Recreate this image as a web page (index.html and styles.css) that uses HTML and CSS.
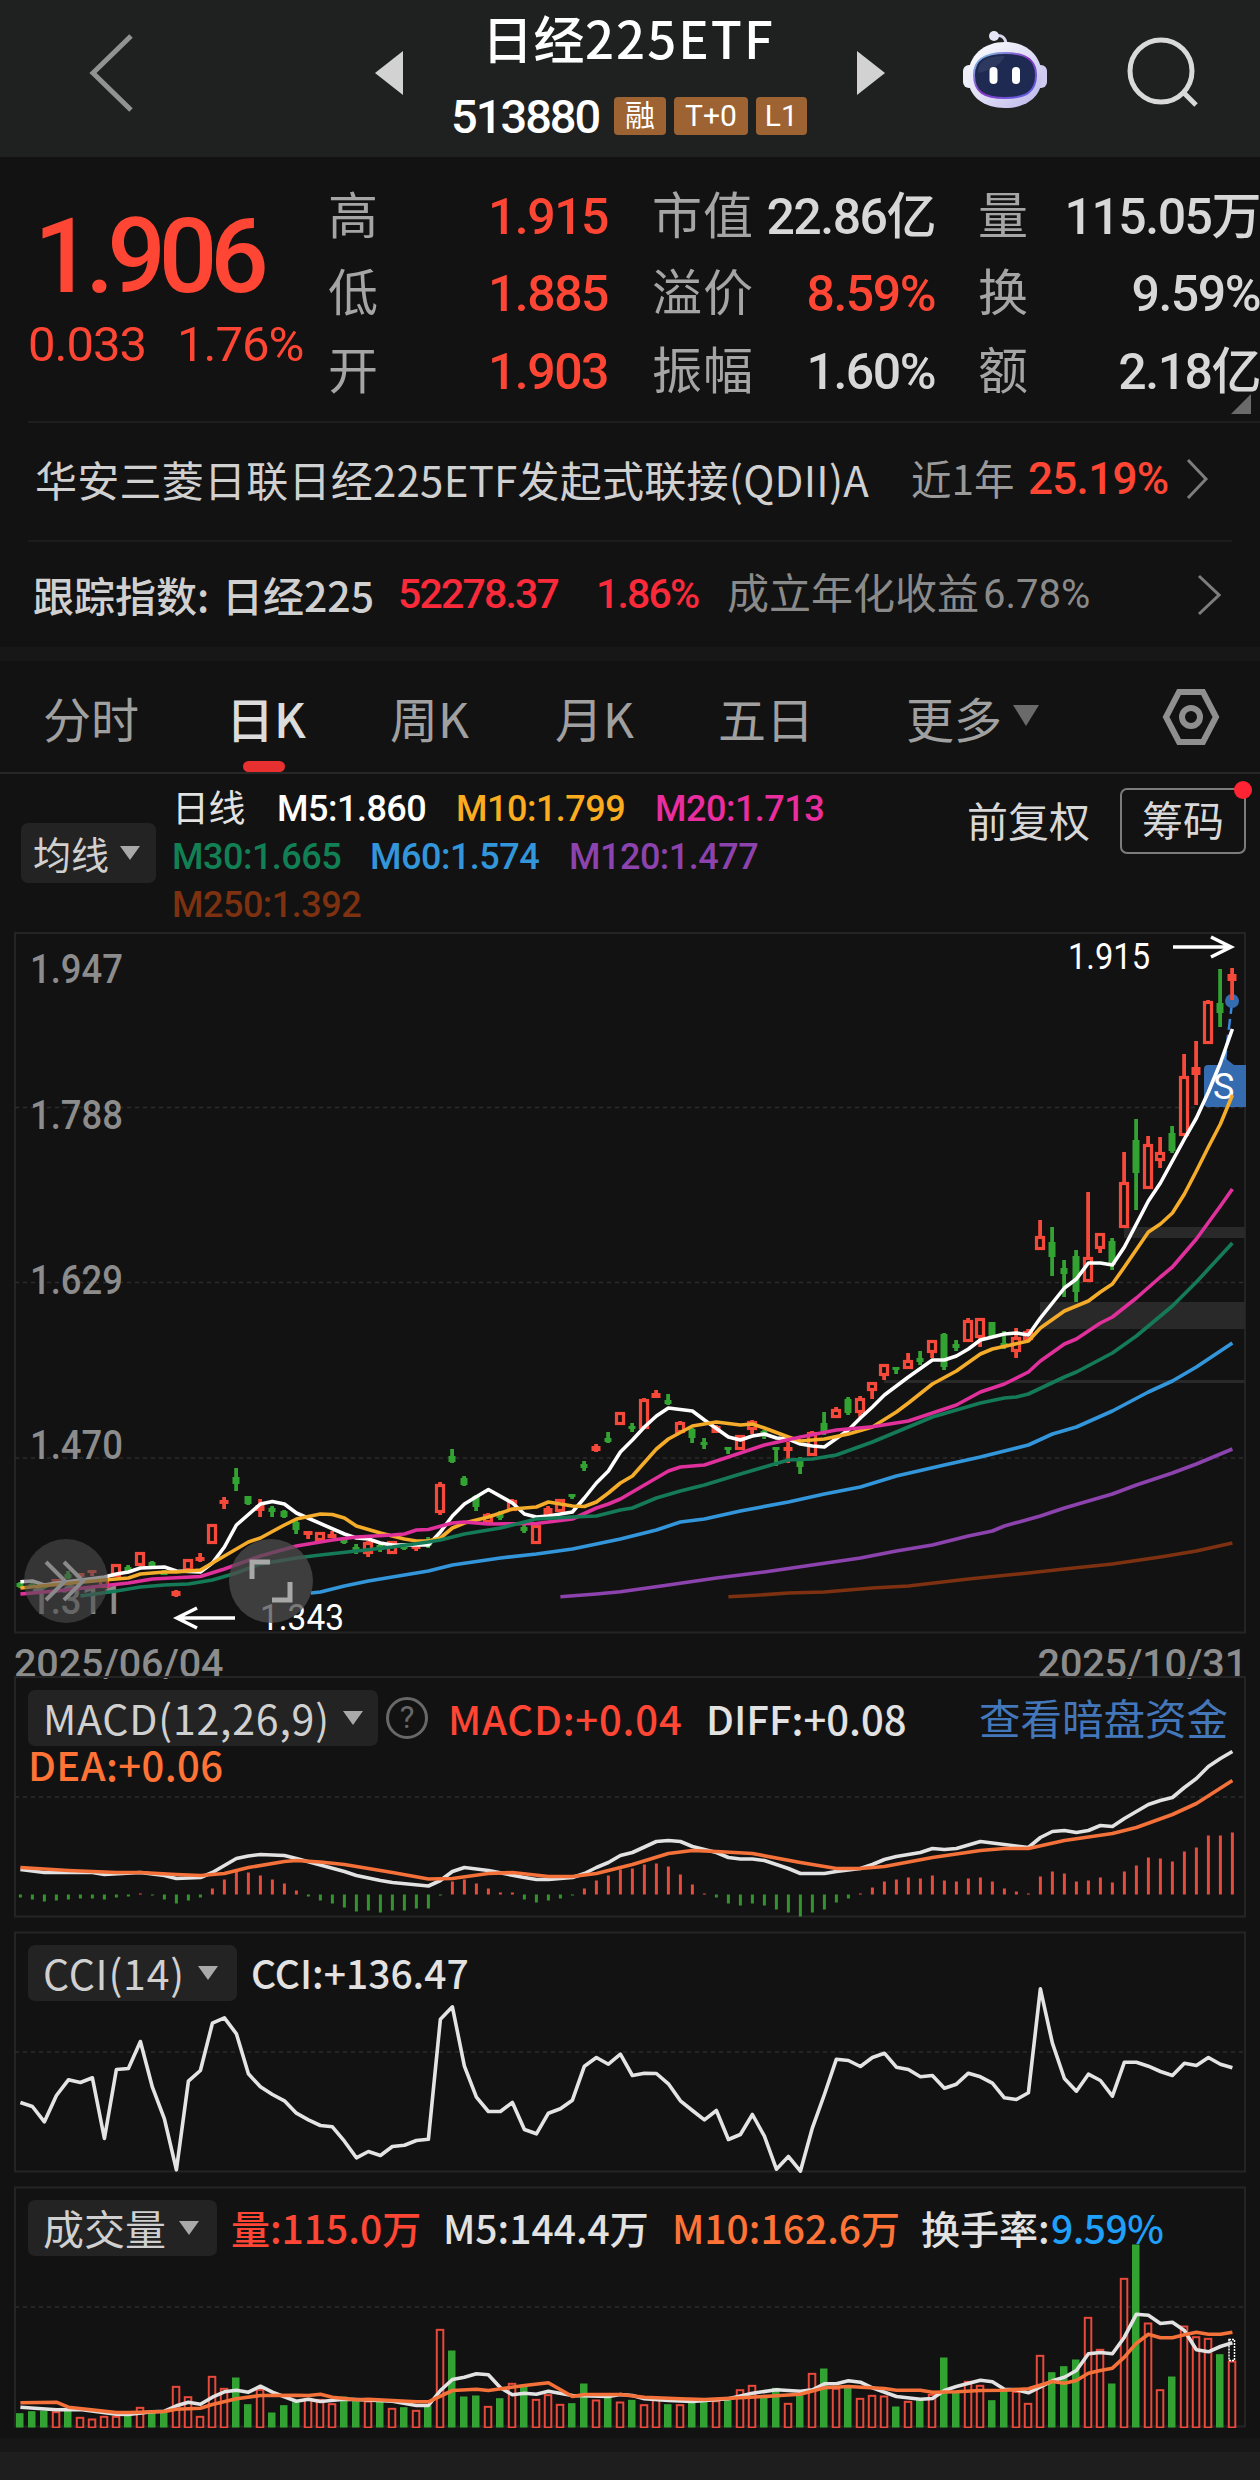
FILE: index.html
```html
<!DOCTYPE html>
<html lang="zh-CN">
<head>
    <meta charset="UTF-8">
    <meta name="viewport" content="width=device-width, initial-scale=1.0">
    <title>日经225ETF 513880</title>
    <link rel="stylesheet" href="styles.css">
</head>
<body>
    <header class="header">
        <svg class="icon-back" width="46" height="80" viewBox="0 0 46 80">
            <path d="M42 3 L4 40 L42 77"/>
        </svg>
        <svg class="icon-prev" width="28" height="44" viewBox="0 0 28 44">
            <path d="M0 22 L28 0 V44 Z"/>
        </svg>
        <div class="title">
            <h1>日经<span>225ETF</span></h1>
            <div class="code">
                <b>513880</b>
                <span class="tag">融</span>
                <span class="tag">T+0</span>
                <span class="tag narrow">L1</span>
            </div>
        </div>
        <svg class="icon-next" width="28" height="44" viewBox="0 0 28 44">
            <path d="M28 22 L0 0 V44 Z"/>
        </svg>
        <svg class="icon-robot" width="84" height="78" viewBox="0 0 84 78">
            <defs>
                <linearGradient id="head" x1="0" y1="0" x2="1" y2="1">
                    <stop offset="0" stop-color="#ffffff"/>
                    <stop offset="0.5" stop-color="#e0dff5"/>
                    <stop offset="1" stop-color="#b9b4ea"/>
                </linearGradient>
                <linearGradient id="glow" x1="0" y1="0" x2="1" y2="1">
                    <stop offset="0" stop-color="#7fd3e6"/>
                    <stop offset="0.5" stop-color="#8a35c8"/>
                    <stop offset="1" stop-color="#5a6be8"/>
                </linearGradient>
            </defs>
            <rect x="0" y="34" width="14" height="23" rx="6" fill="#efeefb"/>
            <rect x="70" y="34" width="14" height="23" rx="6" fill="#cfcbf0"/>
            <path d="M31 5 C39 3 43 7 43 14" fill="none" stroke="#d8d6ee" stroke-width="3"/>
            <circle cx="31" cy="5" r="5" fill="#e6e5f5"/>
            <path d="M42 11 C63 11 79 24 79 46 C79 66 63 77 42 77 C21 77 5 66 5 46 C5 24 21 11 42 11 Z" fill="url(#head)"/>
            <path d="M42 22 C62 22 73 28 73 44 C73 61 63 67 42 67 C21 67 11 61 11 44 C11 28 22 22 42 22 Z" fill="#1f2a52" stroke="url(#glow)" stroke-width="2"/>
            <path d="M15 42 C15 30 24 25 42 25 C38 34 26 40 15 42 Z" fill="#39446b" opacity="0.6"/>
            <rect x="26.500" y="36" width="8" height="17" rx="4" fill="#fff"/>
            <rect x="49" y="36" width="8" height="17" rx="4" fill="#fff"/>
        </svg>
        <svg class="icon-search" width="72" height="72" viewBox="0 0 72 72">
            <circle cx="34" cy="34" r="31"/>
            <path d="M56 55 L69 68"/>
        </svg>
    </header>

    <section class="quote">
        <div class="price">
            <div class="price-now">1.906</div>
            <div class="price-change"><span>0.033</span><span>1.76%</span></div>
        </div>
        <div class="stats">
            <span class="label">高</span><span class="value red">1.915</span>
            <span class="label">市值</span><span class="value">22.86亿</span>
            <span class="label">量</span><span class="value">115.05万</span>
            <span class="label">低</span><span class="value red">1.885</span>
            <span class="label">溢价</span><span class="value red">8.59%</span>
            <span class="label">换</span><span class="value">9.59%</span>
            <span class="label">开</span><span class="value red">1.903</span>
            <span class="label">振幅</span><span class="value">1.60%</span>
            <span class="label">额</span><span class="value">2.18亿</span>
        </div>
        <svg class="corner" width="20" height="20" viewBox="0 0 20 20"><path d="M20 0 V20 H0 Z"/></svg>
    </section>

    <section class="link-row fund">
        <span class="fund-name">华安三菱日联日经225ETF发起式联接(QDII)A</span>
        <span class="muted">近1年</span>
        <b class="red">25.19%</b>
        <svg class="chevron" width="24" height="42" viewBox="0 0 24 42"><path d="M2 2 L20 21 L2 40"/></svg>
    </section>
    <section class="link-row index">
        <span class="strong">跟踪指数:</span>
        <span class="strong">日经225</span>
        <b class="crimson">52278.37</b>
        <b class="crimson">1.86%</b>
        <span class="dim">成立年化收益</span>
        <span class="dim num">6.78%</span>
        <svg class="chevron" width="24" height="42" viewBox="0 0 24 42"><path d="M2 2 L22 21 L2 40"/></svg>
    </section>
    <div class="band"></div>

    <nav class="tabs">
        <span>分时</span>
        <span class="active">日K</span>
        <span>周K</span>
        <span>月K</span>
        <span>五日</span>
        <span class="more">更多<i class="arrow big"></i></span>
        <svg width="58" height="56" viewBox="0 0 58 56">
            <path d="M17 3 H41 L54 28 L41 53 H17 L4 28 Z"/>
            <circle cx="29" cy="28" r="9"/>
        </svg>
    </nav>

    <section class="legend">
        <div class="select ma-select">均线<i class="arrow"></i></div>
        <div class="ma-list">
            <div class="ma-row">
                <span class="cjk">日线</span>
                <span class="ma5">M5:1.860</span>
                <span class="ma10">M10:1.799</span>
                <span class="ma20">M20:1.713</span>
            </div>
            <div class="ma-row second">
                <span class="ma30">M30:1.665</span>
                <span class="ma60">M60:1.574</span>
                <span class="ma120">M120:1.477</span>
            </div>
            <div class="ma-row">
                <span class="ma250">M250:1.392</span>
            </div>
        </div>
        <span class="adjust">前复权</span>
        <div class="chips">筹码<i class="dot"></i></div>
    </section>

    <svg class="kline" id="kline" width="1260" height="702" viewBox="0 932 1260 702"></svg>

    <div class="dates"><span>2025/06/04</span><span>2025/10/31</span></div>

    <section class="panel">
        <svg id="macd" width="1260" height="242" viewBox="0 1675.500 1260 242"></svg>
        <div class="panel-head macd-head">
            <div class="select">MACD(12,26,9)<i class="arrow"></i></div>
            <i class="help">?</i>
            <span class="red">MACD:+0.04</span>
            <span class="light">DIFF:+0.08</span>
            <a class="dark-pool">查看暗盘资金</a>
        </div>
        <div class="dea">DEA:+0.06</div>
    </section>

    <section class="panel">
        <svg id="cci" width="1260" height="242" viewBox="0 1930.500 1260 242"></svg>
        <div class="panel-head cci-head">
            <div class="select">CCI(14)<i class="arrow"></i></div>
            <span class="light">CCI:+136.47</span>
        </div>
    </section>

    <section class="panel">
        <svg id="volume" width="1260" height="242" viewBox="0 2185.500 1260 242"></svg>
        <div class="panel-head vol-head">
            <div class="select">成交量<i class="arrow"></i></div>
            <span class="red">量:115.0万</span>
            <span class="light">M5:144.4万</span>
            <span class="orange">M10:162.6万</span>
            <span class="light">换手率:</span>
            <span class="blue">9.59%</span>
        </div>
    </section>

    <footer class="footer"></footer>

    <script src="script.js"></script>
</body>
</html>
```
FILE: styles.css
```css
* {
    box-sizing: border-box;
}
body {
    margin: 0;
    width: 1260px;
    height: 2480px;
    overflow: hidden;
    background-color: #121212;
    color: #d8d8d8;
    font-family: Roboto, "Noto Sans CJK SC", sans-serif;
    font-size: 42px;
    line-height: 1;
    white-space: nowrap;
}
svg {
    display: block;
    flex: none;
}
i {
    font-style: normal;
}
b {
    font-weight: 500;
}
.red { color: #ff4634; }
.crimson { color: #fb2a3b; }
.orange { color: #ff7336; }
.blue { color: #1fa0fa; }
.light { color: #e2e2e2; }

/* header */
.header {
    display: grid;
    grid-template-columns: 286px 28px 454px 106px 164px 1fr;
    height: 157px;
    padding-left: 89px;
    background-color: #1f2120;
}
.icon-back {
    margin-top: 33px;
    fill: none;
    stroke: #929292;
    stroke-width: 5;
}
.icon-prev, .icon-next {
    margin-top: 51px;
    fill: #d2d2d2;
}
.icon-robot {
    margin-top: 31px;
}
.icon-search {
    margin-top: 37px;
    fill: none;
    stroke: #d9d9d9;
    stroke-width: 5;
}
.title {
    padding: 11px 0 0 48px;
}
.title h1 {
    margin: 0 0 0 31px;
    height: 52px;
    font: 500 51px/52px "Noto Sans CJK SC", sans-serif;
    letter-spacing: 0.5px;
    color: #fff;
}
.title h1 span {
    letter-spacing: 2px;
}
.code {
    display: flex;
    align-items: center;
    gap: 8px;
    height: 40px;
    margin-top: 33px;
}
.code b {
    width: 155px;
    font-size: 47px;
    letter-spacing: -2px;
    color: #fff;
}
.tag {
    height: 38px;
    padding: 0 11px;
    border-radius: 4px;
    background-color: #9e6333;
    color: #fff;
    font-size: 30px;
    line-height: 38px;
}
.tag.narrow {
    padding: 0 9px;
}

/* quote */
.quote {
    position: relative;
    display: flex;
    height: 266px;
}
.quote::after {
    content: "";
    position: absolute;
    left: 28px;
    right: 0;
    bottom: 0;
    height: 2px;
    background-color: #1e1e1e;
}
.price {
    width: 326px;
    padding-left: 28px;
    color: #ff4634;
}
.price-now {
    height: 160px;
    padding: 48px 0 0 6px;
    font-size: 103px;
    font-weight: 500;
    letter-spacing: -7px;
}
.price-change {
    display: flex;
    padding-top: 3px;
    font-size: 49px;
    letter-spacing: -1px;
}
.price-change span:first-child {
    width: 149px;
}
.stats {
    display: grid;
    grid-template-columns: 82px 200px 171px 156px 92px 233px;
    grid-auto-rows: 77.500px;
    align-items: center;
    justify-content: start;
    padding-top: 21px;
}
.stats .label {
    font-size: 50px;
    letter-spacing: 1px;
    color: #a5a5a5;
}
.stats .value {
    display: flex;
    justify-content: flex-end;
    font-size: 50px;
    font-weight: 500;
    letter-spacing: -1.5px;
}
.stats .label:nth-child(6n+1) {
    padding-left: 2px;
}
.stats .label:nth-child(6n+3) {
    padding-left: 44px;
}
.stats .label:nth-child(6n+5) {
    padding-left: 43px;
}
.corner {
    position: absolute;
    right: 9px;
    bottom: 9px;
    fill: #6a6a6a;
}

/* fund and index links */
.link-row {
    display: grid;
    align-items: center;
    color: #d0d0d0;
}
.fund {
    grid-template-columns: 876px 117px 158px 24px;
    height: 119px;
    padding: 0 0 8px 35px;
    font-family: "Noto Sans CJK SC", sans-serif;
    position: relative;
}
.fund::after {
    content: "";
    position: absolute;
    left: 28px;
    right: 28px;
    bottom: 0;
    height: 2px;
    background-color: #1c1c1c;
}
.fund-name {
    letter-spacing: 0.25px;
}
.fund b {
    font-family: Roboto, sans-serif;
    font-size: 44px;
    letter-spacing: -0.7px;
}
.muted {
    color: #9a9a9a;
    font-size: 40.500px;
}
.dim { color: #8a8a8a; }
.index {
    grid-template-columns: 189px 176px 198px 131px 256px 214px 24px;
    height: 105px;
    padding-left: 33px;
}
.index .strong {
    font-weight: 500;
    font-size: 41px;
    font-family: "Noto Sans CJK SC", sans-serif;
}
.index b {
    font-size: 41px;
    letter-spacing: -1.8px;
}
.index .num {
    font-size: 40px;
}
.chevron {
    fill: none;
    stroke: #7d7d7d;
    stroke-width: 3;
}
.band {
    height: 14px;
    background-color: #171717;
}

/* period tabs */
.tabs {
    display: grid;
    grid-template-columns: 183px 164px 165px 163px 188px 253px 58px;
    align-items: center;
    height: 113px;
    padding-left: 43px;
    border-bottom: 2px solid #272727;
    font: 48px/1 "Noto Sans CJK SC", sans-serif;
    color: #a0a0a0;
}
.tabs .active {
    position: relative;
    color: #dcdcdc;
    font-weight: 500;
}
.tabs .active::after {
    content: "";
    position: absolute;
    left: 17px;
    bottom: -31px;
    width: 42px;
    height: 11px;
    border-radius: 6px;
    background-color: #e93030;
}
.tabs svg {
    margin-left: 3px;
    fill: none;
    stroke: #8f8f8f;
    stroke-width: 6;
}
.more {
    display: flex;
    align-items: center;
    gap: 11px;
}
.arrow {
    display: inline-block;
    border: 10px solid transparent;
    border-top: 14px solid #a9a9a9;
    border-bottom: 0;
}
.arrow.big {
    border-width: 21px 13px 0;
    border-top-color: #6a6a6a;
    margin-top: -2px;
}

/* moving average legend */
.legend {
    display: flex;
    height: 157px;
    padding-left: 21px;
}
.select {
    display: flex;
    align-items: center;
    gap: 13px;
    height: 56px;
    padding-left: 15px;
    border-radius: 7px;
    background-color: #232323;
    color: #d0d0d0;
    font-family: "Noto Sans CJK SC", sans-serif;
    font-size: 41px;
}
.ma-select {
    width: 135px;
    height: 60px;
    margin-top: 49px;
    padding-left: 12px;
    font-size: 38px;
    gap: 11px;
}
.ma-list {
    width: 793px;
    padding: 11px 0 0 16px;
}
.ma-row {
    display: grid;
    grid-template-columns: 105px 179px 199px 170px;
    height: 48px;
    align-items: center;
    font-size: 36px;
    font-weight: 500;
    letter-spacing: -0.5px;
}
.ma-row.second {
    grid-template-columns: 198px 199px 190px;
}
.cjk {
    color: #e2e2e2;
    font-size: 37px;
    font-weight: 400;
}
.ma5 { color: #fff; }
.ma10 { color: #fbac1f; }
.ma20 { color: #ea2d9f; }
.ma30 { color: #128055; }
.ma60 { color: #3396db; }
.ma120 { color: #8d43ae; }
.ma250 { color: #7d3110; }
.adjust {
    width: 171px;
    padding: 29px 0 0 18px;
    font-size: 41px;
}
.chips {
    position: relative;
    flex: none;
    width: 126px;
    height: 66px;
    margin-top: 14px;
    border: 2px solid #7c7c7c;
    border-radius: 7px;
    text-align: center;
    font-size: 41px;
    line-height: 65px;
}
.dot {
    position: absolute;
    top: -9px;
    right: -8px;
    width: 18px;
    height: 18px;
    border-radius: 50%;
    background-color: #ff2433;
}

/* charts */
.kline {
    margin-top: 1px;
}
.dates {
    display: flex;
    justify-content: space-between;
    height: 41.500px;
    padding: 10px 13px 0 14px;
    color: #8c8c8c;
    font-size: 39.500px;
    font-weight: 500;
    letter-spacing: -0.1px;
}
.panel {
    display: grid;
    margin-bottom: 13px;
    align-items: start;
}
.panel > * {
    grid-area: 1 / 1;
}
.panel-head {
    display: grid;
    align-items: center;
    margin: 14px 0 0 28px;
    font-family: "Noto Sans CJK SC", sans-serif;
}
.macd-head {
    grid-template-columns: 350px 70px 258px 273px 250px;
}
.macd-head .select, .cci-head .select {
    letter-spacing: 0.8px;
}
.cci-head {
    grid-template-columns: 209px 1fr;
}
.vol-head {
    grid-template-columns: 189px 212px 229px 249px 136px 140px;
}
.panel-head > span {
    font-size: 39px;
    font-weight: 500;
}
.macd-head > span {
    font-size: 40px;
}
.macd-head .red {
    letter-spacing: 0.8px;
}
.cci-head > span, .vol-head > span {
    padding-left: 14px;
}
.vol-head .blue {
    padding-left: 16px;
    margin-left: -8px;
    letter-spacing: -0.5px;
}
.help {
    width: 42px;
    height: 42px;
    margin-left: 8px;
    border: 3px solid #686868;
    border-radius: 50%;
    text-align: center;
    font: 31px/36px Roboto, sans-serif;
    color: #686868;
}
.dark-pool {
    color: #4377b9;
    font-size: 41.500px;
}
.dea {
    margin: 67px 0 0 28px;
    color: #ff7336;
    font: 500 40px/42px "Noto Sans CJK SC", sans-serif;
    letter-spacing: 0.4px;
}
.footer {
    height: 43px;
    margin-top: -3px;
    border-top: 14px solid #171717;
    background-color: #1e1e1e;
}

/* svg parts */
.frame { fill: none; stroke: #242424; stroke-width: 2; }
.grid { stroke: #2d2d2d; stroke-width: 1.500; stroke-dasharray: 4 4; }
.line { fill: none; stroke-width: 3.600; stroke-linejoin: round; }
.axis { fill: #8c8c8c; font-size: 41px; font-weight: 500; }
.mark { fill: #fff; font-size: 36px; }
.pointer { fill: none; stroke: #fff; stroke-width: 3.600; }
.round { fill: #4d4d4d; fill-opacity: 0.6; }
.round.solid { fill-opacity: 0.75; }
.glyph { fill: none; stroke: #a8a8a8; stroke-width: 5; }
.glyph.soft { stroke: #8a8a8a; stroke-width: 4; }
```
FILE: script.js
```js
const NS = 'http://www.w3.org/2000/svg';
const RED = '#f6493a';
const GREEN = '#32a232';
const LEFT = 15;
const RIGHT = 1245;

function add(parent, name, attrs, text) {
    const el = document.createElementNS(NS, name);
    for (const key in attrs) el.setAttribute(key, attrs[key]);
    if (text) el.textContent = text;
    parent.appendChild(el);
    return el;
}

function px(i) {
    return 20.4 + i * 12;
}

function frame(svg, top, bottom, grid) {
    add(svg, 'rect', { x: LEFT, y: top, width: RIGHT - LEFT, height: bottom - top, class: 'frame' });
    grid.forEach(y => add(svg, 'line', { x1: LEFT, x2: RIGHT, y1: y, y2: y, class: 'grid' }));
}

// points: flat list of index, y
function line(svg, color, points, map) {
    let d = '';
    for (let i = 0; i < points.length; i += 2) {
        const y = map ? map(points[i + 1]) : points[i + 1];
        d += (i ? 'L' : 'M') + px(points[i]).toFixed(1) + ' ' + y.toFixed(1);
    }
    add(svg, 'path', { d: d, stroke: color, class: 'line' });
}

// [direction, high, body top, body bottom, low]
const candles = [
    [0,1582,1583,1587,1588],[0,1583,1584,1587,1588],[0,1583,1584,1588,1589],[1,1579,1579,1583,1583],
    [0,1571,1574,1578,1579],[1,1573,1573,1577,1577],[1,1570,1570,1573,1576],[1,1577,1577,1588,1588],
    [1,1564,1564,1577,1577],[0,1565,1567,1571,1571],[1,1552,1552,1566,1566],[0,1561,1562,1567,1569],
    [0,1570,1571,1575,1575],[1,1590,1591,1596,1597],[1,1559,1559,1571,1571],[1,1553,1557,1561,1562],
    [1,1524,1524,1544,1544],[1,1497,1500,1504,1509],[0,1468,1477,1484,1491],[0,1496,1496,1504,1505],
    [1,1499,1505,1511,1517],[0,1506,1508,1512,1517],[0,1510,1511,1517,1518],[0,1520,1522,1530,1534],
    [1,1531,1531,1535,1539],[1,1532,1532,1541,1541],[1,1531,1534,1538,1538],[0,1538,1539,1543,1544],
    [0,1544,1547,1551,1554],[1,1541,1542,1554,1557],[0,1543,1545,1550,1552],[1,1541,1541,1554,1554],
    [0,1543,1545,1549,1550],[1,1545,1546,1549,1551],[0,1537,1539,1546,1548],[1,1482,1484,1513,1515],
    [0,1449,1456,1462,1463],[0,1476,1478,1485,1486],[0,1495,1496,1507,1511],[1,1513,1514,1523,1523],
    [0,1511,1513,1518,1520],[1,1499,1500,1511,1511],[0,1524,1527,1531,1533],[1,1525,1525,1544,1544],
    [1,1506,1508,1516,1516],[1,1499,1499,1512,1512],[0,1494,1494,1496,1499],[0,1461,1464,1468,1471],
    [1,1444,1446,1451,1452],[0,1432,1438,1442,1443],[1,1412,1412,1425,1425],[0,1423,1426,1429,1432],
    [1,1398,1399,1429,1429],[1,1390,1393,1398,1398],[0,1394,1400,1404,1405],[1,1421,1422,1433,1433],
    [0,1428,1429,1438,1443],[0,1438,1442,1445,1449],[1,1425,1426,1433,1433],[0,1447,1447,1450,1454],
    [1,1435,1435,1450,1450],[1,1420,1421,1430,1434],[0,1430,1431,1435,1439],[0,1447,1447,1449,1466],
    [1,1442,1447,1451,1463],[0,1457,1461,1467,1474],[1,1431,1432,1456,1456],[0,1412,1423,1431,1435],
    [1,1407,1409,1418,1418],[0,1397,1399,1413,1415],[1,1396,1398,1413,1417],[1,1382,1382,1391,1399],
    [1,1364,1364,1376,1380],[0,1367,1367,1370,1374],[1,1353,1360,1369,1369],[0,1351,1358,1362,1365],
    [1,1340,1340,1353,1358],[0,1333,1334,1367,1370],[0,1340,1344,1348,1351],[1,1318,1320,1342,1342],
    [1,1318,1318,1338,1347],[0,1322,1322,1336,1337],[0,1331,1343,1347,1349],[1,1328,1337,1352,1358],
    [1,1329,1331,1340,1340],[1,1220,1236,1250,1250],[0,1227,1242,1257,1276],[0,1260,1268,1274,1297],
    [0,1250,1256,1292,1302],[1,1192,1257,1282,1282],[1,1233,1233,1249,1253],[0,1238,1241,1265,1270],
    [1,1152,1182,1228,1228],[0,1119,1140,1173,1210],[1,1136,1144,1189,1189],[1,1137,1152,1161,1168],
    [0,1126,1133,1151,1153],[1,1054,1076,1136,1136],[1,1041,1067,1075,1105],[1,1000,1001,1044,1044],
    [0,969,1003,1013,1027],[1,968,974,981,1000]
];

const ma = [
    ['#8d43ae', [45,1596.7,48,1594,50,1591.7,54,1585,58,1578,62,1572,66,1565,70,1558,73,1551,76,1545,79,1536,81,1531,82,1526,85,1516,87,1508,91,1494,93,1485,96,1473,98,1464,101,1449]],
    ['#7d3110', [59,1596.7,61,1595.5,64,1593,67,1592,71,1588,74,1586,79,1579,84,1573,87,1569,91,1564,95,1557,98,1551,101,1543]],
    ['#ffffff', [0,1581.7,1,1581,2,1585,3,1583,5,1580,7,1577,8,1574,9,1572,10,1568,12,1567,13,1571,15,1572,16,1563,17,1547,18,1525,20,1504,21,1501.5,22,1504,23,1513,27,1534,28,1538,29,1539,30,1543,31,1545,34,1545,35,1532,36,1516,37,1504,39,1489.5,41,1503,42,1514,43,1517,44,1516,46,1512,47,1498,48,1483,49,1471,50,1452,51,1440,52,1427,53,1416,54,1408,56,1411,57,1420,59,1437,60,1440,61,1436,62,1434,63,1438,64,1439,65,1444,66,1446,67,1447,69,1430,70,1418,71,1407,72,1395,74,1377,76,1360,77,1360,78,1356,79,1349,80,1340,82,1334,83,1333,84,1335,85,1318,87,1288,88,1279,89,1263,90,1263,91,1265,92,1247,94,1201,95,1183,96,1161,97,1139,98,1118,99,1092,100,1063,101,1029]],
    ['#f4ac2a', [0,1588,7,1580,9,1578,10,1574,12,1572,13,1572,15,1570,16,1563,17,1556,19,1542,20,1538,22,1525,23,1519,25,1514,26,1514.5,27,1518,28,1526,30,1533,31,1536,32,1539,33,1541,34,1541,35,1538,36,1528,37,1523,39,1517,41,1509,43,1507,44,1502,46,1506,47,1506.5,48,1502,49,1493,50,1483,51,1476,53,1449,54,1439,56,1426,58,1422,60,1425,61,1424,62,1428,64,1437,65,1441,66,1440,67,1439,69,1434,71,1427,73,1412,74,1403,76,1384,78,1371,80,1354,81,1349,84,1341,85,1328,87,1311,88,1306,89,1301,90,1292,91,1284,92,1267,94,1232,95,1224,96,1213,97,1194,98,1171,99,1147,100,1124,101,1095]],
    ['#e0309c', [0,1594,3,1591,9,1583,11,1579,15,1576.5,17,1569,20,1556,23,1546,26,1540,28,1537,31,1535,32,1534,33,1530,34,1529.5,36,1523,37,1522,39,1524,43,1523.5,46,1519,48,1508,49,1504,50,1499,52,1485,54,1471,55,1467,57,1465,60,1453,62,1445,65,1437,68,1430,71,1426.7,74,1421,76,1413,78,1405,80,1392,82,1384,84,1372,85,1361,87,1344,88,1339,90,1323,91,1317,93,1298,95,1277,96,1267,98,1239,100,1206,101,1189]],
    ['#157a57', [5,1596,8,1591,10,1587,12,1585,14,1584,16,1580,18,1573,20,1564,23,1558,25,1555,28,1551,31,1547,34,1542,35,1540,37,1534,40,1528,43,1519,46,1517,48,1516,50,1510,51,1508,53,1498,55,1491,57,1485,60,1474,62,1467,64,1460,66,1459,68,1455,71,1442,74,1427,76,1417,80,1403,82,1398,83,1397,84,1394,87,1377,88,1372,91,1353,93,1336,95,1316,96,1306,98,1282,99,1269,101,1243]],
    ['#3396db', [24.2,1593,25,1592,27,1586,29,1581,34,1571,36,1565,40,1558,43,1554,46,1549,48,1544,50,1539,53,1530,55,1522,57,1519,60,1511,64,1502,67,1494,70,1487,73,1476,77,1465,80,1457,84,1445,86,1434,88,1427,91,1411,94,1392,96,1381,98,1367,101,1343]]
];

function drawKline() {
    const svg = document.getElementById('kline');
    frame(svg, 933, 1632.5, [1107.5, 1282.5, 1458]);

    [[1124, 1227, 11], [1040, 1302, 27], [884, 1380, 3]].forEach(g => {
        add(svg, 'rect', { x: g[0], y: g[1], width: RIGHT - g[0], height: g[2], fill: '#292929' });
    });

    [['1.947', 983], ['1.788', 1129], ['1.629', 1294], ['1.470', 1459], ['1.311', 1614]].forEach(t => {
        add(svg, 'text', { x: 30, y: t[1], textLength: 93, lengthAdjust: 'spacingAndGlyphs', class: 'axis' }, t[0]);
    });

    add(svg, 'path', { d: 'M1208 1065 H1218 L1225 1058 L1234 1065 H1246 V1107 H1208 Q1204 1107 1204 1103 V1069 Q1204 1065 1208 1065 Z', fill: '#356caf' });
    add(svg, 'path', { d: 'M1232 1003 L1225 1060', stroke: '#3d86dd', 'stroke-width': 2.5, 'stroke-dasharray': '11 5', fill: 'none' });
    add(svg, 'circle', { cx: 1232, cy: 1001, r: 7, fill: '#356caf' });
    add(svg, 'text', { x: 1213, y: 1099, class: 'mark' }, 'S');

    candles.forEach((c, i) => {
        const x = Math.round(px(i) - 0.4);
        const color = c[0] ? RED : GREEN;
        const h = Math.max(c[3] - c[2], 3);
        add(svg, 'rect', { x: x - 1.8, y: c[1], width: 3.8, height: c[4] - c[1], fill: color });
        if (c[0] && h > 8) {
            add(svg, 'rect', { x: x - 3.5, y: c[2] + 1.5, width: 7, height: h - 3, fill: '#121212', stroke: color, 'stroke-width': 3.2 });
        } else {
            const w = c[0] ? 9 : 7;
            add(svg, 'rect', { x: x - w / 2, y: c[2], width: w, height: h, fill: color });
        }
    });

    ma.forEach(m => line(svg, m[0], m[1]));

    add(svg, 'text', { x: 1068, y: 969, textLength: 82, lengthAdjust: 'spacingAndGlyphs', class: 'mark' }, '1.915');
    add(svg, 'path', { d: 'M1173 947 H1231 M1211 937 L1231 947 L1211 957', class: 'pointer' });
    add(svg, 'text', { x: 260, y: 1630, textLength: 84, lengthAdjust: 'spacingAndGlyphs', class: 'mark' }, '1.343');
    add(svg, 'path', { d: 'M235 1618 H177 M197 1608 L177 1618 L197 1628', class: 'pointer' });

    add(svg, 'circle', { cx: 66, cy: 1581, r: 42, class: 'round' });
    add(svg, 'path', { d: 'M46 1562 L65 1581 L46 1600 M64 1562 L83 1581 L64 1600', class: 'glyph soft' });
    add(svg, 'circle', { cx: 271, cy: 1581, r: 42, class: 'round solid' });
    add(svg, 'path', { d: 'M252 1579 V1562 H270 M290 1582 V1600 H272', class: 'glyph' });
}

const macdBars = [
    -3,-5,-7,-6,-5,-4,-4,-5,-3,-2,1,-1,-5,-9,-6,-3,6,15,23,22,19,15,11,4,-2,-6,-9,-13,-17,-16,-18,-16,-16,-14,
    -14,-1,13,15,11,6,2,2,-5,-8,-6,-4,-1,6,14,19,25,26,30,31,28,20,10,1,-3,-9,-11,-9,-11,-15,-18,-22,-18,-15,
    -8,-4,1,7,13,15,17,16,19,14,13,16,17,13,6,3,1,18,23,21,13,14,17,12,23,29,37,36,33,43,47,59,59,62
];
const diff = [0,1869,2,1872,6,1872,7,1874,10,1872,12,1875,13,1878,15,1877,16,1872,17,1865,18,1858,19,1855.5,20,1854,22,1855,23,1858,27,1871,28,1875,30,1880,31,1882,34,1885.5,35,1880,36,1871,37,1867,39,1870,42,1877,43,1879,44,1879,46,1877,47,1873,48,1867,49,1862,50,1855,51,1852,53,1841,54,1840,55,1841,56,1846,58,1852,59,1857,60,1858.5,61,1858.5,62,1860,64,1868,65,1873,67,1873,68,1871,70,1868,71,1864,72,1859,73,1856,75,1852,76,1848,77,1849,78,1848,80,1841,82,1844,84,1847,85,1837,86,1831,87,1830,88,1832,89,1830,90,1825,91,1826,92,1818,94,1804,95,1800,96,1797,97,1787,98,1778,99,1766,100,1758,101,1751];
const dea = [0,1867,4,1870,8,1872,10,1872,13,1874,15,1875,17,1873,19,1867,22,1861,23,1860,25,1861.5,27,1864,31,1872,34,1878.5,36,1878,39,1873,41,1872,44,1876,46,1876,48,1873,51,1864,54,1853,56,1850,58,1851,61,1853,65,1862,68,1868,70,1868,72,1866,76,1857,80,1850,82,1848,84,1848,87,1840,91,1833,93,1827,96,1814,98,1803,101,1780];

function drawMacd() {
    const svg = document.getElementById('macd');
    frame(svg, 1676.5, 1916, [1796.5]);
    macdBars.forEach((v, i) => {
        add(svg, 'rect', { x: px(i) - 1.5, y: v > 0 ? 1894 - v : 1894, width: 3, height: Math.abs(v), fill: v > 0 ? '#e64b3c' : '#32942c' });
    });
    line(svg, '#e2e2e2', diff);
    line(svg, '#f4713a', dea);
}

const cci = [
    1296,1308,1354,1275,1228,1236,1222,1404,1197,1194,1113,1250,1345,1498,1232,1200,1058,1042,1090,1210,1249,
    1272,1291,1328,1348,1365,1369,1412,1462,1443,1455,1428,1424,1410,1406,1046,1009,1187,1280,1323,1323,1296,
    1377,1390,1328,1315,1289,1187,1161,1181,1151,1215,1208,1209,1240,1291,1320,1348,1320,1407,1392,1332,1397,
    1496,1458,1502,1372,1272,1166,1170,1188,1161,1148,1190,1197,1219,1215,1253,1241,1208,1219,1238,1282,1287,
    1267,955,1118,1224,1262,1211,1230,1277,1175,1175,1187,1203,1215,1178,1185,1161,1181,1192
];

function drawCci() {
    const svg = document.getElementById('cci');
    frame(svg, 1932, 2171, [2051.5]);
    const points = [];
    cci.forEach((v, i) => points.push(i, v));
    line(svg, '#e4e4e4', points, v => 1670 + v / 3);
}

const vol = [
    'g698','g692','g690','r692','g685','r709','r714','r706','r706','g700','r679','g693','g695','r616','r647','r706','r586',
    'r622','g591','g671','r625','g696','g674','g665','r652','r655','r668','g648','g662','r660','g662','r682','g680','r688',
    'g675','r445','g510','g648','g645','r676','g653','r607','g613','r655','r641','r670','g668','g609','r657','g650','r663',
    'g658','r671','r655','g671','r671','g662','g662','r659','g650','r626','r613','g648','g622','r667','g645','r577','g564',
    'r622','g622','r652','r643','r645','g678','r661','g655','r640','g531','g635','r601','r613','g659','g628','r631','r667',
    'r523','g575','g557','g537','r409','r505','g609','r292','g192','r426','r626','g588','r435','r467','r472','g521','r540'
];
const volMa5 = [0,680,3,688,5,687,8,701,9,702,11,694,12,692,13,676,14,665,15,671,16,650,17,634,18,629,19,635,20,617,21,635,23,662,24,656,25,663,27,656,28,657,31,662,33,675,34,675,35,630,36,597,37,590,38,580,39,583,40,622,41,643,42,638,43,641,44,632,46,645,49,648,50,642,51,645,52,655,54,660,56,663,59,655,61,638,63,628,65,632,66,628,67,610,68,610,69,601,70,605,71,622,73,648,75,656,76,654,77,630,78,618,80,599,81,604,82,626,83,628,84,637,86,601,87,590,88,570,89,520,90,516,91,520,92,470,93,401,94,404,95,429,96,425,97,450,98,508,99,514,100,498,101,487];
const volMa10 = [0,667,3,665,4,680,8,696,9,696,12,693,13,686,15,683,16,672,18,655,20,645,23,644,24,645,25,641,26,650,28,658,29,656,33,664,34,664,36,630,38,626,39,630,42,615,44,607,46,648,47,642,50,642,52,650,55,655,57,657,60,652,63,646,65,641,67,622,69,618,72,624,73,629,75,629,76,635,78,634,80,630,82,629,84,625,86,603,87,608,88,600,89,578,90,570,91,563,92,530,93,488,94,461,95,472,96,472,97,463,98,455,99,461,100,461,101,455];

function drawVolume() {
    const svg = document.getElementById('volume');
    const scale = v => 2180 + v / 3;
    frame(svg, 2187, 2426, [2306.5]);
    vol.forEach((item, i) => {
        const y = scale(+item.slice(1));
        const x = px(i) - 0.4;
        if (item[0] === 'g') {
            add(svg, 'rect', { x: x - 4, y: y, width: 7.5, height: 2427 - y, fill: GREEN });
        } else {
            add(svg, 'rect', { x: x - 3.2, y: y + 1, width: 6.5, height: 2426 - y, fill: '#121212', stroke: '#e8493a', 'stroke-width': 2 });
        }
    });
    // projected volume for the current day
    add(svg, 'rect', { x: 1229, y: 2339, width: 5.5, height: 21, fill: 'none', stroke: '#fff', 'stroke-width': 1.5, 'stroke-dasharray': '2 1' });
    line(svg, '#e2e2e2', volMa5, scale);
    line(svg, '#f4713a', volMa10, scale);
}

drawKline();
drawMacd();
drawCci();
drawVolume();
```
